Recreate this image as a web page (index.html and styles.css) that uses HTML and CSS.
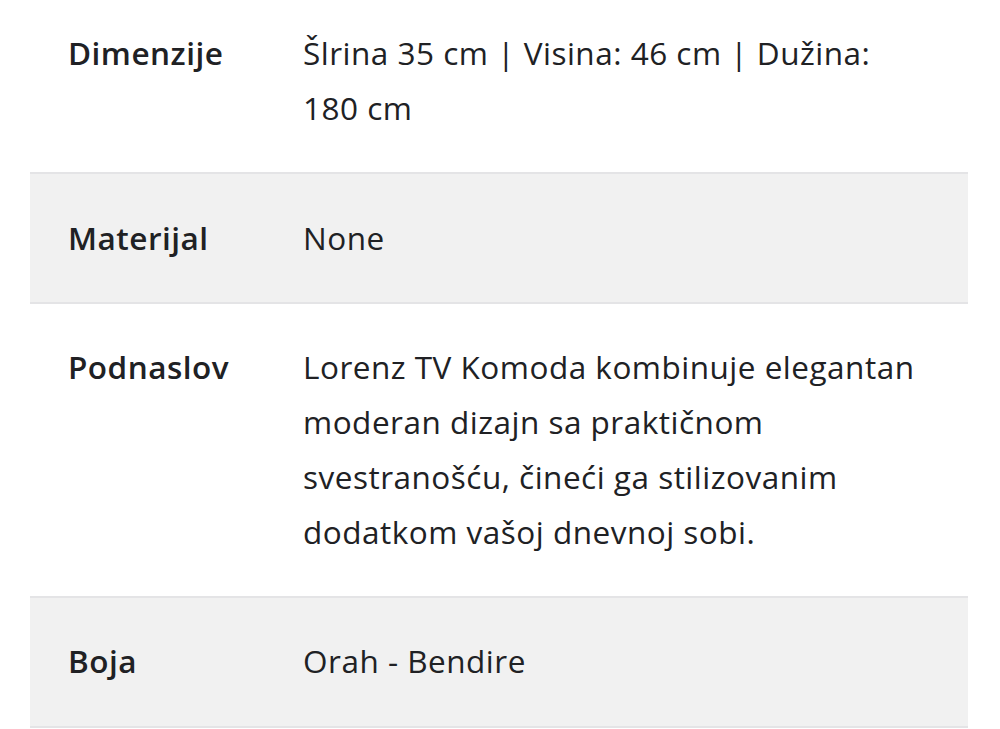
FILE: index.html
```html
<!DOCTYPE html>
<html lang="sr">
<head>
<meta charset="utf-8">
<title>Specifikacije</title>
<link rel="stylesheet" href="styles.css">
</head>
<body>
<div class="specs">
  <div class="row">
    <div class="label">Dimenzije</div>
    <div class="value">Šlrina 35 cm | Visina: 46 cm | Dužina: 180 cm</div>
  </div>
  <div class="row alt">
    <div class="label">Materijal</div>
    <div class="value">None</div>
  </div>
  <div class="row">
    <div class="label">Podnaslov</div>
    <div class="value">Lorenz TV Komoda kombinuje elegantan moderan dizajn sa praktičnom svestranošću, čineći ga stilizovanim dodatkom vašoj dnevnoj sobi.</div>
  </div>
  <div class="row alt">
    <div class="label">Boja</div>
    <div class="value">Orah - Bendire</div>
  </div>
</div>
</body>
</html>
```
FILE: styles.css
```css
html, body {
  margin: 0;
  padding: 0;
  background: #ffffff;
}
body {
  font-family: "Open Sans", "Noto Sans", sans-serif;
  color: #202124;
  overflow: hidden;
}
.specs {
  margin: -10.5px 0 0 30px;
  width: 938px;
}
.row {
  display: grid;
  grid-template-columns: 235px 1fr;
  padding: 36.6px 38px;
  border-bottom: 2px solid #e4e4e6;
  font-size: 31.5px;
  line-height: 54.67px;
  letter-spacing: 0.5px;
}
.row.alt {
  background: #f1f1f1;
}
.label {
  font-weight: 600;
}
.value {
  font-weight: 400;
}
```
